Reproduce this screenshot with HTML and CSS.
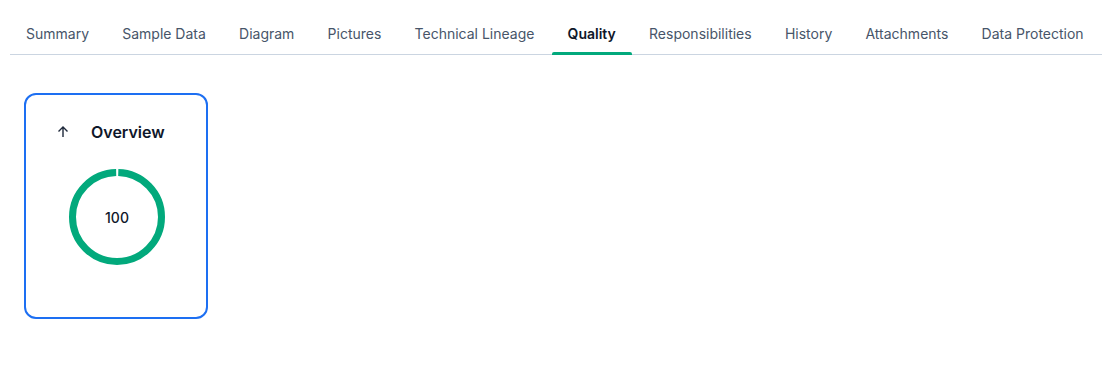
FILE: index.html
```html
<!doctype html>
<html lang="en">
  <head>
    <meta charset="UTF-8" />
    <meta name="viewport" content="width=device-width, initial-scale=1.0" />
    <title>Quality</title>
    <link rel="stylesheet" href="styles.css">
  </head>
  <body>
    <nav class="tabs">
      <a class="tab">Summary</a>
      <a class="tab">Sample Data</a>
      <a class="tab">Diagram</a>
      <a class="tab">Pictures</a>
      <a class="tab">Technical Lineage</a>
      <a class="tab active">Quality</a>
      <a class="tab">Responsibilities</a>
      <a class="tab">History</a>
      <a class="tab">Attachments</a>
      <a class="tab">Data Protection</a>
    </nav>

    <main class="content">
      <section class="card">
        <div class="card-header">
          <svg class="icon" width="16" height="16" viewBox="0 0 16 16">
            <path d="M8 13V3M3.5 7.5 8 3l4.5 4.5" fill="none" stroke="#1e293b" stroke-width="1.4" />
          </svg>
          <h3>Overview</h3>
        </div>
        <div class="donut">
          <svg width="96" height="96" viewBox="0 0 96 96">
            <circle cx="48" cy="48" r="44.5" fill="none" stroke="#02a97c" stroke-width="7"
              stroke-dasharray="277 2.6" stroke-dashoffset="-1.3" transform="rotate(-90 48 48)" />
          </svg>
          <span class="score">100</span>
        </div>
      </section>
    </main>
  </body>
</html>
```

FILE: styles.css
```css
body {
  margin: 0;
  font-family: Inter, "Noto Sans", sans-serif;
  background: white;
  color: #0f172a;
}
.tabs {
  display: flex;
  gap: 1.2px;
  margin: 0 0 0 10px;
  padding-top: 14px;
  border-bottom: 1px solid #cbd5e1;
}
.tab {
  position: relative;
  flex-shrink: 0;
  white-space: nowrap;
  padding: 10px 16px;
  font-size: 14px;
  line-height: 20px;
  color: #475569;
  cursor: pointer;
}
.tab.active {
  color: #0f172a;
  font-weight: 600;
}
.tab.active::after {
  content: "";
  position: absolute;
  left: 0;
  right: 0;
  bottom: -1px;
  height: 3px;
  border-radius: 2px 2px 0 0;
  background: #02a97c;
}
.content {
  padding: 38px 0 0 24px;
}
.card {
  box-sizing: border-box;
  width: 184px;
  height: 226px;
  border: 2px solid #1d6ff2;
  border-radius: 12px;
  padding: 25px 0 0;
}
.card-header {
  display: flex;
  align-items: center;
  gap: 20px;
  padding-left: 29px;
  height: 24px;
}
.card-header h3 {
  margin: 0;
  font-size: 16px;
  font-weight: 600;
}
.donut {
  position: relative;
  width: 96px;
  height: 96px;
  margin: 25px 0 0 43px;
}
.donut svg {
  display: block;
}
.score {
  position: absolute;
  inset: 0;
  display: flex;
  align-items: center;
  justify-content: center;
  font-size: 14px;
  font-weight: 500;
}
```
